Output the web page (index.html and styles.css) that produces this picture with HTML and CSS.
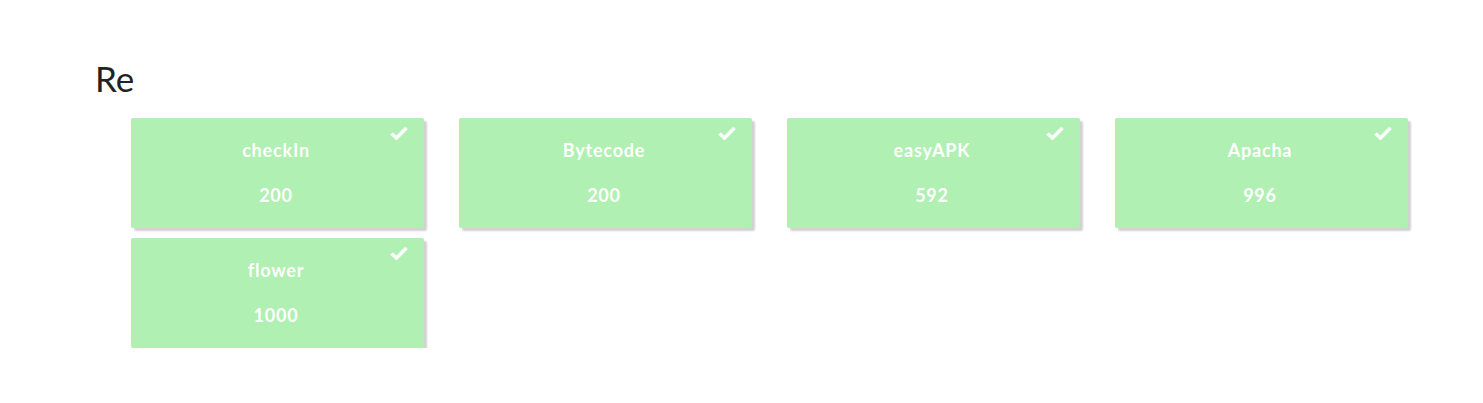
FILE: index.html
```html
<!DOCTYPE html>
<html>
<head>
<meta charset="utf-8">
<link rel="stylesheet" href="styles.css">
</head>
<body>
<div class="page">
  <h1 class="title">Re</h1>
  <div class="grid">
    <div class="card"><svg class="check" viewBox="0 0 18 14"><path d="M1.5 7.5 L6.5 12 L16.5 2" /></svg><div class="name">checkIn</div><div class="score">200</div></div>
    <div class="card"><svg class="check" viewBox="0 0 18 14"><path d="M1.5 7.5 L6.5 12 L16.5 2" /></svg><div class="name">Bytecode</div><div class="score">200</div></div>
    <div class="card"><svg class="check" viewBox="0 0 18 14"><path d="M1.5 7.5 L6.5 12 L16.5 2" /></svg><div class="name">easyAPK</div><div class="score">592</div></div>
    <div class="card"><svg class="check" viewBox="0 0 18 14"><path d="M1.5 7.5 L6.5 12 L16.5 2" /></svg><div class="name">Apacha</div><div class="score">996</div></div>
    <div class="card"><svg class="check" viewBox="0 0 18 14"><path d="M1.5 7.5 L6.5 12 L16.5 2" /></svg><div class="name">flower</div><div class="score">1000</div></div>
  </div>
</div>
</body>
</html>
```
FILE: styles.css
```css
html, body {
  margin: 0;
  padding: 0;
  background: #fff;
  font-family: Lato, "Liberation Sans", sans-serif;
}
.page {
  padding: 58px 0 0 95px;
}
.title {
  margin: 0;
  font-size: 35px;
  font-weight: 400;
  line-height: 40px;
  color: #222;
}
.grid {
  margin: 20px 0 0 36px;
  display: grid;
  grid-template-columns: repeat(4, 293px);
  column-gap: 35px;
  row-gap: 10px;
}
.card {
  position: relative;
  height: 110px;
  background: #b0f0b2;
  box-shadow: 3px 3px 2px rgba(0, 0, 0, 0.18);
  border-radius: 2px;
  color: #fff;
  font-weight: 700;
  font-size: 18px;
  letter-spacing: 0.8px;
  text-align: center;
  display: flex;
  flex-direction: column;
  align-items: center;
  padding: 22px 3px 0 0;
  box-sizing: border-box;
}
.name {
  line-height: 20px;
}
.score {
  line-height: 20px;
  margin-top: 25px;
}
.check {
  position: absolute;
  top: 8px;
  right: 16px;
  width: 18px;
  height: 14px;
  fill: none;
  stroke: #fff;
  stroke-width: 3.5;
  stroke-linecap: butt;
  stroke-linejoin: miter;
}
```
